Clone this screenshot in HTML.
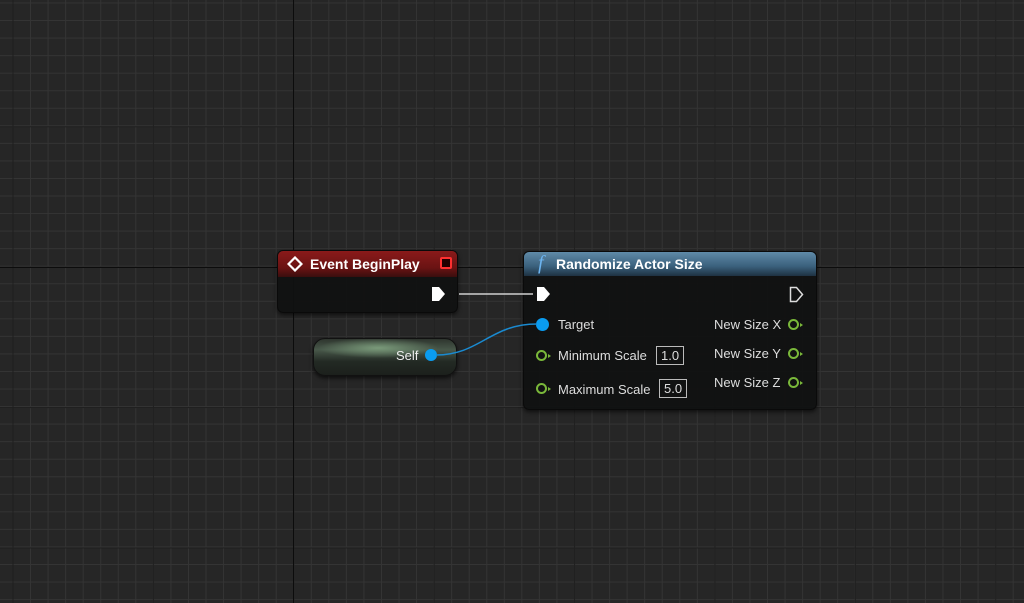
<!DOCTYPE html>
<html><head><style>
html,body{margin:0;padding:0}
body{width:1024px;height:603px;overflow:hidden;position:relative;font-family:"Liberation Sans",sans-serif;
background-color:#262626;
background-image:
linear-gradient(to right,#1f1f1f 1px,transparent 1px),
linear-gradient(to bottom,#1f1f1f 1px,transparent 1px),
linear-gradient(to right,#343434 1px,transparent 1px),
linear-gradient(to bottom,#343434 1px,transparent 1px);
background-size:140.4px 140.4px,140.4px 140.4px,17.55px 17.55px,17.55px 17.55px;
background-position:12.5px 126.3px,12.5px 126.3px,12.5px 2.5px,12.5px 2.5px;}
.ax{position:absolute;background:#0c0c0c}
.node{position:absolute;border-radius:6px;background:rgba(16,17,17,0.94);box-shadow:0 2px 4px rgba(0,0,0,.6);border:1px solid #0a0a0a}
.hdr{position:absolute;left:0;right:0;top:0;border-radius:5px 5px 0 0;color:#fff;font-weight:bold;font-size:14px}
.t{position:absolute;color:#ddd;font-size:13px;white-space:nowrap}
.pin{position:absolute;width:7px;height:7px;border:2.5px solid #7ab83a;border-radius:50%}
.pin:after{content:"";position:absolute;right:-6px;top:1.5px;border-left:3px solid #7ab83a;border-top:2px solid transparent;border-bottom:2px solid transparent}
.box{position:absolute;border:1px solid #bbb;color:#ddd;font-size:13px;padding:0 4px;height:17px;line-height:17px}
</style></head><body>
<div class="ax" style="left:293px;top:0;width:1px;height:603px"></div>
<div class="ax" style="left:0;top:267px;width:1024px;height:1px"></div>

<!-- Event node -->
<div class="node" style="left:277px;top:250px;width:179px;height:61px">
<div class="hdr" style="height:26px;background:linear-gradient(#8a1a1a,#6a1313 65%,#3a0e0e)">
<svg style="position:absolute;left:9px;top:5px" width="16" height="16"><path d="M8 1.5 L14.5 8 L8 14.5 L1.5 8 Z" fill="none" stroke="#fff" stroke-width="2.2"/></svg>
<span style="position:absolute;left:32px;top:5px">Event BeginPlay</span>
<div style="position:absolute;right:5px;top:6px;width:8px;height:8px;border:2px solid #ff3030;background:#200;border-radius:2px"></div>
</div>
<svg style="position:absolute;left:153px;top:35px" width="15" height="16"><path d="M1 1 H8 L14 8 L8 15 H1 Z" fill="#fff"/></svg>
</div>

<!-- Self node -->
<div style="position:absolute;left:313px;top:338px;width:142px;height:36px;border-radius:12px;background:radial-gradient(ellipse 60px 10px at 45% 25%,#7a9a7a,transparent),linear-gradient(to bottom,#2e352e,#48584a 30%,#232a24 62%,#1c201c);box-shadow:0 2px 4px rgba(0,0,0,.7);border:1px solid #111"></div>
<div class="t" style="left:396px;top:348px;color:#eee">Self</div>
<div style="position:absolute;left:425px;top:349px;width:12px;height:12px;border-radius:50%;background:#0a9cf0"></div>

<!-- Function node -->
<div class="node" style="left:523px;top:251px;width:292px;height:157px">
<div class="hdr" style="height:24px;background:linear-gradient(#5f8aa8,#3a607c 60%,#1e3242)">
<span style="position:absolute;left:14px;top:0px;font-family:'Liberation Serif',serif;font-style:italic;font-size:20px;color:#6cb4f0;font-weight:normal">f</span>
<span style="position:absolute;left:32px;top:4px">Randomize Actor Size</span>
</div>
<svg style="position:absolute;left:12px;top:34px" width="15" height="16"><path d="M1 1 H8 L14 8 L8 15 H1 Z" fill="#fff"/></svg>
<svg style="position:absolute;left:265px;top:34px" width="15" height="17"><path d="M1.5 1.5 H7.5 L13.5 8.5 L7.5 15.5 H1.5 Z" fill="none" stroke="#ddd" stroke-width="1.5"/></svg>
<div style="position:absolute;left:12px;top:66px;width:13px;height:13px;border-radius:50%;background:#0a9cf0"></div>
<div class="t" style="left:34px;top:65px">Target</div>
<div class="pin" style="left:12px;top:98px"></div>
<div class="t" style="left:34px;top:96px">Minimum Scale</div>
<div class="box" style="left:132px;top:94px">1.0</div>
<div class="pin" style="left:12px;top:131px"></div>
<div class="t" style="left:34px;top:130px">Maximum Scale</div>
<div class="box" style="left:135px;top:127px">5.0</div>
<div class="t" style="left:190px;top:65px">New Size X</div>
<div class="pin" style="left:264px;top:67px"></div>
<div class="t" style="left:190px;top:94px">New Size Y</div>
<div class="pin" style="left:264px;top:96px"></div>
<div class="t" style="left:190px;top:123px">New Size Z</div>
<div class="pin" style="left:264px;top:125px"></div>
</div>

<svg style="position:absolute;left:0;top:0" width="1024" height="603">
<line x1="459" y1="294" x2="533" y2="294" stroke="#cfcfcf" stroke-width="1.5"/>
<path d="M436 355 C480 355,490 324,537 324" stroke="#1a8ad0" stroke-width="1.5" fill="none"/>
</svg>
</body></html>
